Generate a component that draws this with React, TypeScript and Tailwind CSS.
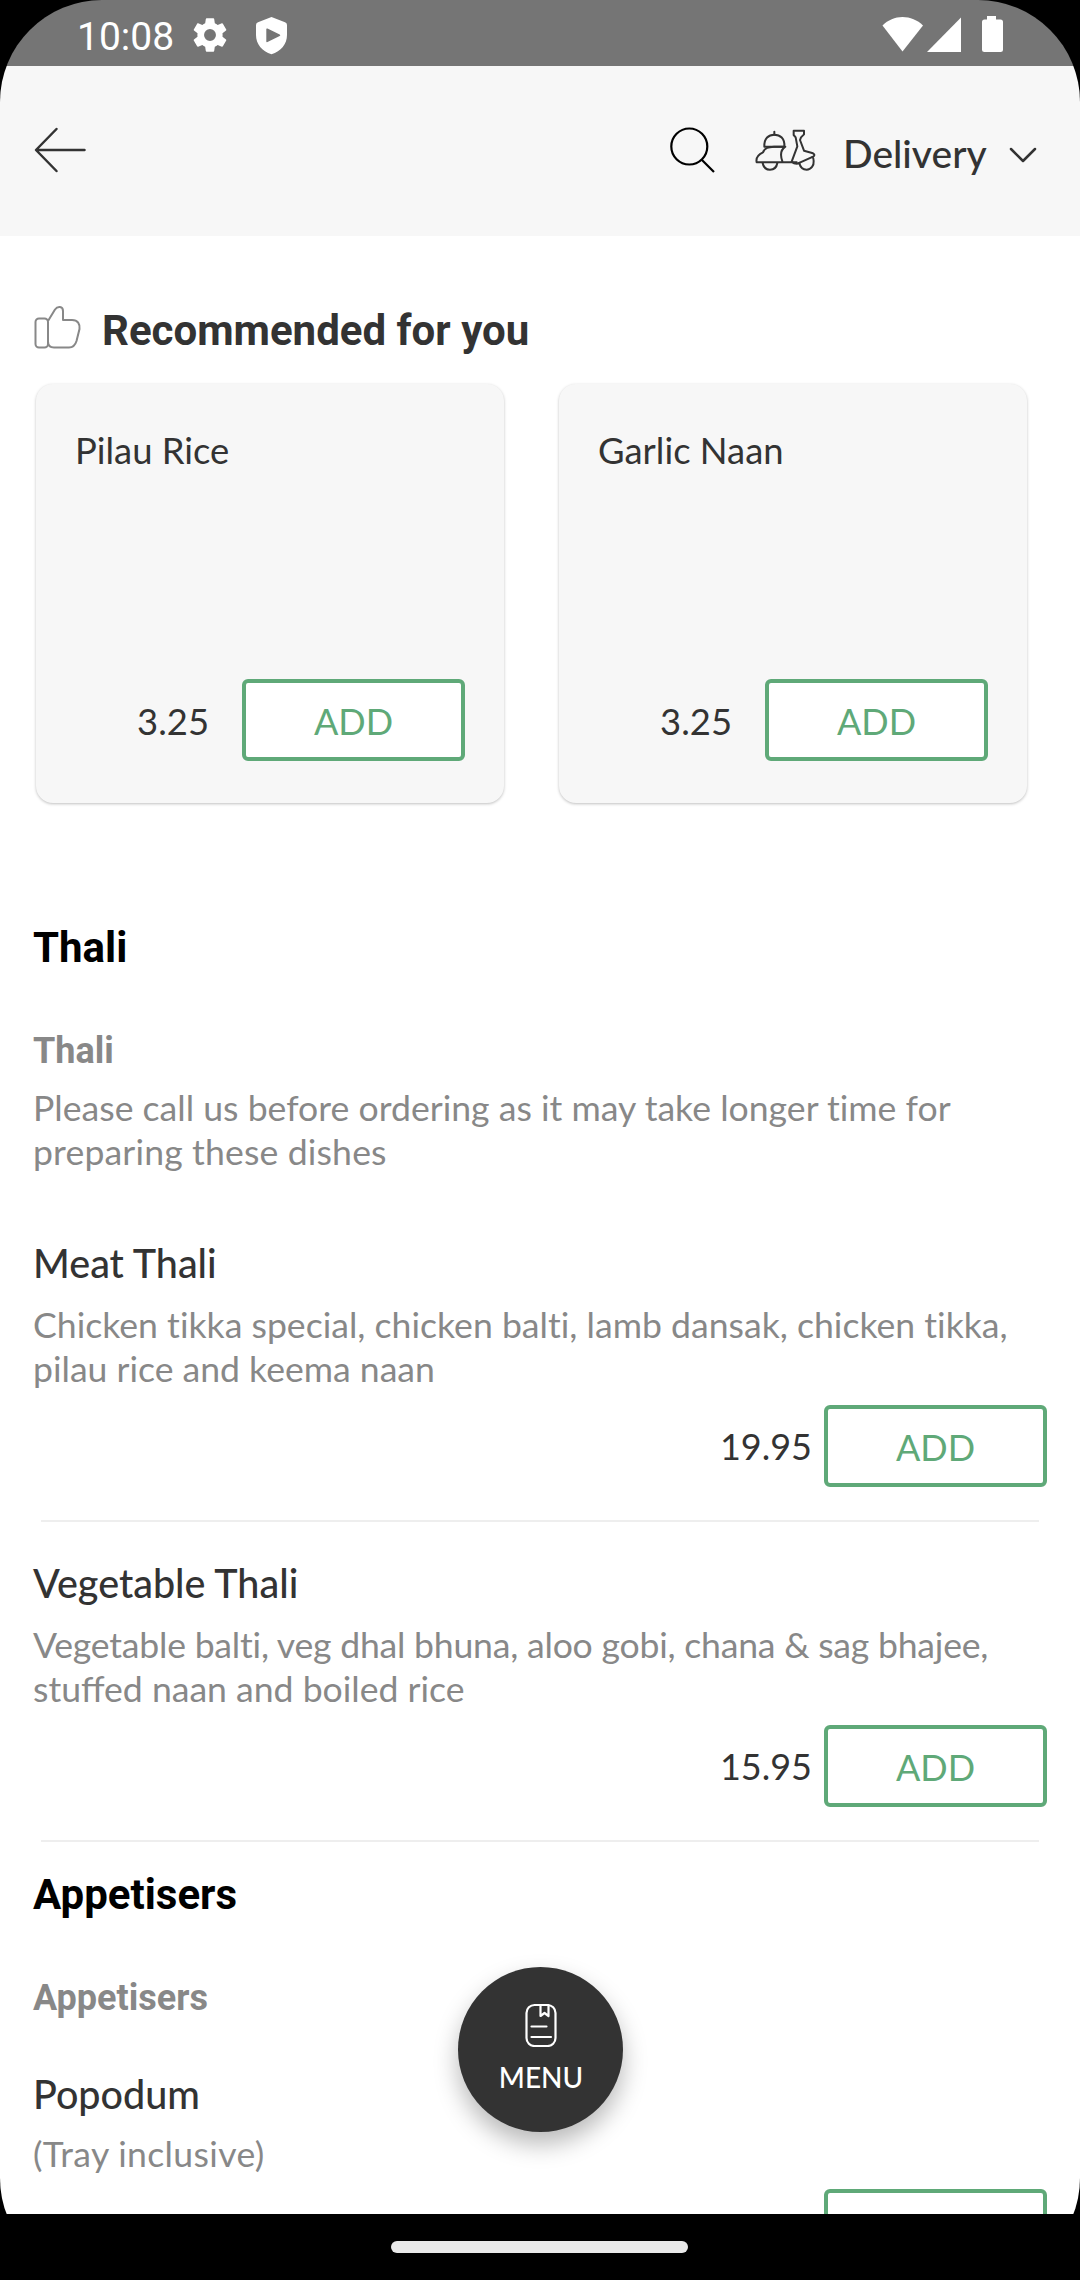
import type { ReactNode } from "react";

type Line = { text: string; className: string };
type Dish = { name: string; description: Line[]; price: string };

const recommended = [
  { name: "Pilau Rice", price: "3.25" },
  { name: "Garlic Naan", price: "3.25" },
];

const notice: Line[] = [
  {
    text: "Please call us before ordering as it may take longer time for",
    className: "tracking-[0.02px] [font-variant-ligatures:none]",
  },
  { text: "preparing these dishes", className: "tracking-[0.16px]" },
];

const thali: Dish[] = [
  {
    name: "Meat Thali",
    description: [
      {
        text: "Chicken tikka special, chicken balti, lamb dansak, chicken tikka,",
        className: "tracking-[0.02px] [font-variant-ligatures:none]",
      },
      { text: "pilau rice and keema naan", className: "" },
    ],
    price: "19.95",
  },
  {
    name: "Vegetable Thali",
    description: [
      {
        text: "Vegetable balti, veg dhal bhuna, aloo gobi, chana & sag bhajee,",
        className: "tracking-[-0.21px] [font-variant-ligatures:none]",
      },
      { text: "stuffed naan and boiled rice", className: "" },
    ],
    price: "15.95",
  },
];

function StatusBar() {
  return (
    <div className="flex h-[66px] shrink-0 items-start bg-[#757575] text-white">
      <span className="ml-[77px] mt-[7px] w-[112px] font-['Roboto',sans-serif] text-[39px] leading-[61px]">10:08</span>
      {/* Settings */}
      <svg className="mt-[14px]" width="42" height="42" viewBox="0 0 24 24" fill="currentColor">
        <path d="M19.14 12.94c.04-.3.06-.61.06-.94 0-.32-.02-.64-.07-.94l2.03-1.58a.49.49 0 0 0 .12-.61l-1.92-3.32a.488.488 0 0 0-.59-.22l-2.39.96c-.5-.38-1.03-.7-1.62-.94l-.36-2.54a.484.484 0 0 0-.48-.41h-3.84c-.24 0-.43.17-.47.41l-.36 2.54c-.59.24-1.13.57-1.62.94l-2.39-.96c-.22-.08-.47 0-.59.22L2.74 8.87c-.12.21-.08.47.12.61l2.03 1.58c-.05.3-.09.63-.09.94s.02.64.07.94l-2.03 1.58a.49.49 0 0 0-.12.61l1.92 3.32c.12.22.37.29.59.22l2.39-.96c.5.38 1.03.7 1.62.94l.36 2.54c.05.24.24.41.48.41h3.84c.24 0 .44-.17.47-.41l.36-2.54c.59-.24 1.13-.56 1.62-.94l2.39.96c.22.08.47 0 .59-.22l1.92-3.32c.12-.22.07-.47-.12-.61l-2.01-1.58zM12 15.4a3.4 3.4 0 1 1 0-6.8 3.4 3.4 0 0 1 0 6.8z" />
      </svg>
      {/* Play Protect shield */}
      <svg className="ml-[25px] mt-[17px]" width="31" height="38" viewBox="0 0 31 38" fill="currentColor" fillRule="evenodd">
        <path d="M15.500 0 29 5.200Q31 6 31 8V18C31 27 25 34.500 15.500 37.300 6 34.500 0 27 0 18V8Q0 6 2 5.200ZM10.300 12.300V24.300Q10.300 25.500 11.500 25L23.700 19Q25 18.300 23.700 17.600L11.500 11.600Q10.300 11.100 10.300 12.300Z" />
      </svg>
      <svg className="ml-auto mr-[77px] mt-4" width="121" height="37" viewBox="0 0 121 37" fill="currentColor">
        <path d="M0.500 9.500C6 4 13 1 20.500 1S35.500 4 41 9.500L20.500 35.500Z" />
        <path d="M45 36H79V1.500Z" />
        <path d="M105 0h9v3.500h4.500a2.500 2.500 0 0 1 2.500 2.500v27.500a2.500 2.500 0 0 1-2.500 2.500h-16a2.500 2.500 0 0 1-2.500-2.500V6a2.500 2.500 0 0 1 2.500-2.500h2.500z" />
      </svg>
    </div>
  );
}

function Header() {
  return (
    <header className="flex h-[170px] shrink-0 items-start bg-[#f7f7f7] text-[#333]">
      <svg className="ml-[34px] mt-[61px]" width="53" height="46" viewBox="0 0 53 46" fill="none" stroke="currentColor" strokeWidth="2.500" strokeLinecap="round" strokeLinejoin="round">
        <path d="M50.500 23H2.500M22.500 2 2 23 22.500 44" />
      </svg>
      <svg className="ml-auto mt-[60px] text-black" width="46" height="48" viewBox="0 0 46 48" fill="none" stroke="currentColor" strokeWidth="2.200">
        <circle cx="20.300" cy="20.500" r="18" />
        <path d="M32.500 33.500 45 46" />
      </svg>
      {/* Scooter */}
      <svg className="ml-[39px] mt-[62px]" width="64" height="46" viewBox="342 385 192 138" fill="none" stroke="currentColor" strokeWidth="6" strokeLinecap="round" strokeLinejoin="round">
        <path d="M350 488H470M350 488C347 474 356 464 369 458C374 444 386 442 402 441H436C421 451 421 470 428 488" />
        <path d="M373 441C372 416 386 405 403 405S435 416 433 441Z" />
        <path d="M403 396V405" />
        <path d="M368 490C370 502 378 510 390 510S410 502 412 490" />
        <path d="M455 486 472 440 467 413 461 406V393H492V404L483 413 480 421 492 453 519 461Q526 465 521 470L481 488Q468 497 455 486" />
        <path d="M478 491C481 503 490 510 500 510C514 510 522 497 521 484C521 478 520 474 517 472" />
      </svg>
      <span className="ml-[25px] mt-[65px] w-[145px] text-[39px] font-medium leading-[44px]">Delivery</span>
      <svg className="ml-[21px] mr-[43px] mt-[79px]" width="28" height="20" viewBox="0 0 28 20" fill="none" stroke="currentColor" strokeWidth="2.500" strokeLinecap="round" strokeLinejoin="round">
        <path d="M2 4 14 16 26 4" />
      </svg>
    </header>
  );
}

function AddButton() {
  return (
    <button className="flex h-[82px] w-[223px] shrink-0 items-center justify-center rounded-[6px] border-4 border-[#5fa978] bg-white pt-[2px] text-[36px] leading-[44px] text-[#5fa978]">
      ADD
    </button>
  );
}

function Heading({ children }: { children: ReactNode }) {
  return <h2 className="font-['Roboto',sans-serif] text-[42px] font-bold leading-[50px] text-black">{children}</h2>;
}

function SubHeading({ children }: { children: ReactNode }) {
  return <h3 className="mt-14 font-['Roboto',sans-serif] text-[36px] font-bold leading-[44px] text-[#888]">{children}</h3>;
}

function Lines({ lines }: { lines: Line[] }) {
  return (
    <div className="whitespace-nowrap text-[35.6px] leading-[44px] text-[#888]">
      {lines.map((line) => (
        <p key={line.text} className={line.className}>
          {line.text}
        </p>
      ))}
    </div>
  );
}

function DishRow({ dish }: { dish: Dish }) {
  return (
    <article className="flex flex-col">
      <h4 className="text-[39.5px] font-medium leading-[48px]">{dish.name}</h4>
      <div className="mt-4">
        <Lines lines={dish.description} />
      </div>
      <div className="mt-[14px] flex items-center justify-end gap-3">
        <span className="text-[36px] leading-[44px]">{dish.price}</span>
        <AddButton />
      </div>
      <hr className="mx-2 mt-[33px] border-t-2 border-[#eeeeee]" />
    </article>
  );
}

export default function App() {
  return (
    <div className="h-[2280px] w-[1080px] overflow-hidden bg-black font-['Lato',sans-serif] text-[#333]">
      <div className="relative flex h-full flex-col overflow-hidden rounded-[102px]">
        <StatusBar />
        <Header />
        <main className="flex min-h-0 flex-1 flex-col overflow-hidden bg-white px-[33px]">
          <div className="mt-[69px] flex shrink-0">
            <svg width="50" height="50" viewBox="33 305 50 50" fill="none" stroke="#888" strokeWidth="2" strokeLinejoin="round">
              <rect x="35.500" y="318.500" width="12.500" height="29" rx="3.500" />
              <path d="M48 321 55 309.500C57.500 306 63 306 63 311V320H72C78 320 80 324 79.500 329L76.500 341C75 346 73 347.500 69 347.500H54C50 347.500 48 345.500 48 341.500" />
            </svg>
            <h2 className="ml-[19px] pt-px font-['Roboto',sans-serif] text-[42px] font-bold leading-[50px]">Recommended for you</h2>
          </div>
          <div className="ml-[3px] mt-[28px] flex shrink-0 gap-[55px]">
            {recommended.map((item) => (
              <article
                key={item.name}
                className="flex h-[419px] w-[468px] flex-col rounded-[17px] bg-[#f7f7f7] pb-[42px] pl-[39px] pr-[39px] pt-[44px] shadow-[0_1px_3px_rgba(0,0,0,0.250)]"
              >
                <h3 className="text-[36.4px] leading-[44px]">{item.name}</h3>
                <div className="mt-auto flex items-center justify-end gap-[33px]">
                  <span className="pt-[2px] text-[36.4px] leading-[44px]">{item.price}</span>
                  <AddButton />
                </div>
              </article>
            ))}
          </div>

          <section className="mt-[120px] flex shrink-0 flex-col">
            <Heading>Thali</Heading>
            <SubHeading>Thali</SubHeading>
            <div className="mb-[65px] mt-[13px]">
              <Lines lines={notice} />
            </div>
            <div className="flex flex-col gap-[37px]">
              {thali.map((dish) => (
                <DishRow key={dish.name} dish={dish} />
              ))}
            </div>
          </section>

          <section className="mt-7 flex shrink-0 flex-col">
            <Heading>Appetisers</Heading>
            <SubHeading>Appetisers</SubHeading>
            <h4 className="mt-[50px] text-[39.5px] font-medium leading-[48px]">Popodum</h4>
            <div className="mt-[14px]">
              <Lines lines={[{ text: "(Tray inclusive)", className: "tracking-[0.35px]" }]} />
            </div>
            <div className="mt-[13px] flex justify-end">
              <AddButton />
            </div>
          </section>
        </main>

        <div className="flex h-[66px] shrink-0 bg-black pt-[27px]">
          <div className="ml-[391px] h-3 w-[297px] rounded-full bg-[#e9e9e9]" />
        </div>

        <button className="absolute left-[458px] top-[1967px] flex h-[165px] w-[165px] flex-col items-center rounded-full bg-[#333] pt-9 text-white shadow-[0_12px_24px_rgba(0,0,0,0.280)]">
          <svg width="32" height="44" viewBox="0 0 32 44" fill="none" stroke="currentColor" strokeWidth="2.200" strokeLinecap="round" strokeLinejoin="round">
            <rect x="1.500" y="2" width="29" height="41" rx="8" />
            <path d="M15.500 2V13L19.500 10 23.500 13V2M6.500 23.500H21.500M6.500 34H26" />
          </svg>
          <span className="mt-[13px] pl-px text-[28px] font-medium leading-[34px]">MENU</span>
        </button>
      </div>
    </div>
  );
}
